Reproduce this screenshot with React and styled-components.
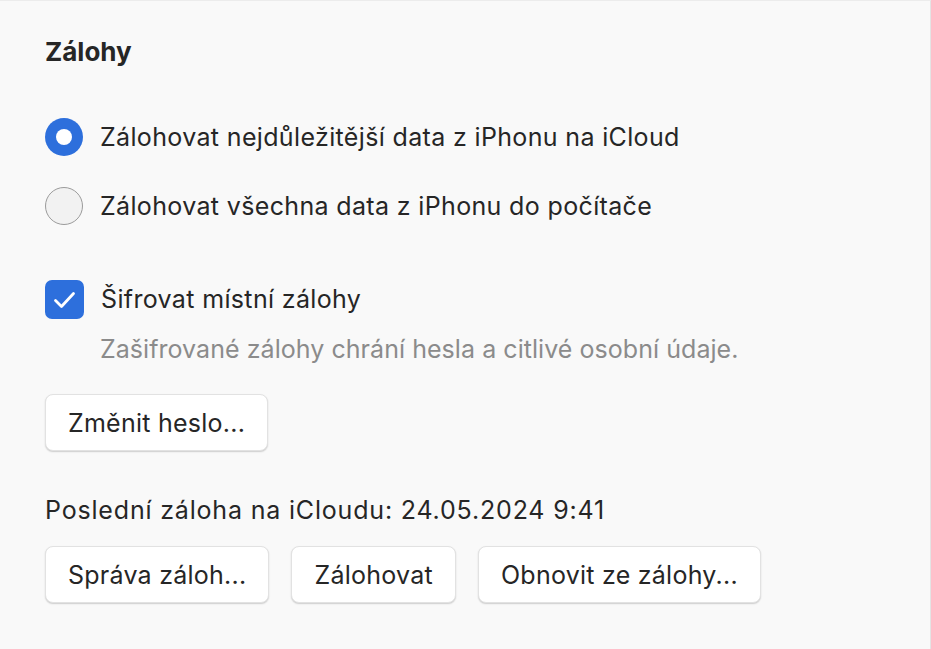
import React from 'react';
import styled, { createGlobalStyle } from 'styled-components';

const GlobalStyle = createGlobalStyle`
  html, body {
    margin: 0;
    padding: 0;
    background: #f9f9f9;
  }
  body {
    font-family: Inter, "Liberation Sans", sans-serif;
    color: #262626;
    -webkit-font-smoothing: antialiased;
  }
`;

const Panel = styled.div`
  box-sizing: border-box;
  width: 931px;
  height: 649px;
  padding: 36px 0 0 45px;
  border-top: 1px solid #ececec;
  border-right: 1px solid #e4e4e4;
  display: flex;
  flex-direction: column;
  align-items: flex-start;
  font-size: 25px;
  letter-spacing: 0.35px;
`;

const Title = styled.h2`
  margin: 0 0 51px;
  font-size: 26px;
  line-height: 30px;
  font-weight: 700;
  letter-spacing: 0;
`;

const OptionRow = styled.label`
  display: flex;
  align-items: center;
  gap: 17px;
  height: ${(p) => p.$height || 38}px;
  margin-bottom: ${(p) => p.$gap || 0}px;
`;

const Radio = styled.span`
  box-sizing: border-box;
  width: 38px;
  height: 38px;
  border-radius: 50%;
  flex-shrink: 0;
  display: flex;
  align-items: center;
  justify-content: center;
  background: ${(p) => (p.$checked ? '#2d6fdc' : '#f2f2f2')};
  border: ${(p) => (p.$checked ? 'none' : '1.5px solid #9b9b9b')};

  &::after {
    content: '';
    display: ${(p) => (p.$checked ? 'block' : 'none')};
    width: 16px;
    height: 16px;
    border-radius: 50%;
    background: #fff;
  }
`;

const Checkbox = styled.span`
  width: 39px;
  height: 39px;
  border-radius: 7px;
  flex-shrink: 0;
  background: #2d6fdc;
  display: flex;
`;

const Hint = styled.p`
  margin: 15px 0 30px 55px;
  line-height: 30px;
  color: #8b8b8b;
  letter-spacing: 0.05px;
`;

const Info = styled.p`
  margin: 44px 0 21px;
  line-height: 30px;
  letter-spacing: 0.82px;
`;

const ButtonRow = styled.div`
  display: flex;
  gap: 22px;
`;

const Button = styled.button`
  box-sizing: border-box;
  height: 57px;
  padding: 0 22px;
  font-family: inherit;
  font-size: 25px;
  letter-spacing: 0.25px;
  color: #262626;
  background: #fff;
  border: 1px solid #e2e2e2;
  border-radius: 8px;
  box-shadow: 0 1px 1.5px rgba(0, 0, 0, 0.18);
`;

const Check = () => (
  <svg width="39" height="39" viewBox="0 0 39 39" fill="none">
    <path d="M10.5 20.5 L16.5 26.5 L28.5 13.5" stroke="#fff" strokeWidth="2.8" strokeLinecap="round" strokeLinejoin="round" />
  </svg>
);

export default function App() {
  return (
    <>
      <GlobalStyle />
      <Panel>
        <Title>Zálohy</Title>
        <OptionRow $gap={31}>
          <Radio $checked />
          Zálohovat nejdůležitější data z iPhonu na iCloud
        </OptionRow>
        <OptionRow $gap={54}>
          <Radio />
          Zálohovat všechna data z iPhonu do počítače
        </OptionRow>
        <OptionRow $height={40}>
          <Checkbox>
            <Check />
          </Checkbox>
          Šifrovat místní zálohy
        </OptionRow>
        <Hint>Zašifrované zálohy chrání hesla a citlivé osobní údaje.</Hint>
        <Button>Změnit heslo...</Button>
        <Info>Poslední záloha na iCloudu: 24.05.2024 9:41</Info>
        <ButtonRow>
          <Button>Správa záloh...</Button>
          <Button>Zálohovat</Button>
          <Button>Obnovit ze zálohy...</Button>
        </ButtonRow>
      </Panel>
    </>
  );
}
